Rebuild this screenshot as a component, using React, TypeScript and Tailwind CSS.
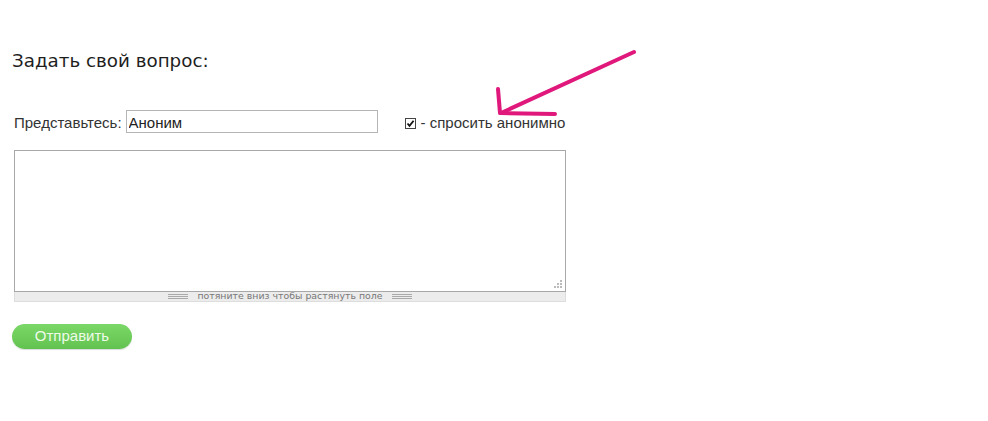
import { useState } from "react";

export default function App() {
  const [name, setName] = useState("Аноним");
  const [anon, setAnon] = useState(true);

  return (
    <div className="relative h-[421px] w-[988px] bg-white font-['Liberation_Sans',Arial,sans-serif] text-[#222]">
      <div className="flex flex-col pl-3 pt-[49px]">
        <h2 className="font-['DejaVu_Sans',sans-serif] text-[18.3px] leading-6 text-[#1e1e1e]">Задать свой вопрос:</h2>

        {/* name + anonymous */}
        <div className="mt-[36px] flex items-center pl-[2px]">
          <label className="pt-[3px] text-[15px] text-[#333]">Представьтесь:</label>
          <input
            value={name}
            onChange={(e) => setName(e.target.value)}
            className="ml-[4px] h-[23px] w-[252px] border border-[#b5b5b5] px-[2px] pt-[2px] text-[15px] text-[#222] outline-none"
          />
          <label
            className="ml-[27px] flex cursor-pointer items-center gap-[5px] pt-[3px] text-[15px] text-[#333]"
            onClick={() => setAnon(!anon)}
          >
            <span className="flex h-[11px] w-[11px] items-center justify-center border border-[#444] bg-white">
              {anon && (
                <svg width="9" height="9" viewBox="0 0 9 9">
                  <path d="M1.5 4.5 L3.5 6.8 L7.6 1.8" stroke="#111" strokeWidth="1.8" fill="none" />
                </svg>
              )}
            </span>
            - спросить анонимно
          </label>
        </div>

        {/* textarea with resize bar */}
        <div className="mt-[15px] ml-[2px] w-[552px]">
          <div className="relative h-[142px] border border-[#a8a8a8]">
            <textarea className="h-full w-full resize-none p-1 text-[13px] outline-none" />
            <div className="absolute bottom-[3px] right-[3px] grid grid-cols-3 gap-[1px]">
              {[0, 1, 2, 3, 4, 5, 6, 7, 8].map((i) => (
                <span
                  key={i}
                  className={`h-[2px] w-[2px] ${[2, 4, 5, 6, 7, 8].includes(i) ? "bg-[#bbb]" : "bg-transparent"}`}
                />
              ))}
            </div>
          </div>
          <div className="flex h-[10px] items-center justify-center gap-[9px] border-x border-b border-[#ddd] bg-[#ececec]">
            <div className="flex w-[20px] flex-col gap-[1px]">
              <span className="h-px bg-[#aaa]" />
              <span className="h-px bg-[#aaa]" />
              <span className="h-px bg-[#aaa]" />
            </div>
            <span className="font-['DejaVu_Sans',sans-serif] text-[9.4px] leading-[10px] text-[#777]">
              потяните вниз чтобы растянуть поле
            </span>
            <div className="flex w-[20px] flex-col gap-[1px]">
              <span className="h-px bg-[#aaa]" />
              <span className="h-px bg-[#aaa]" />
              <span className="h-px bg-[#aaa]" />
            </div>
          </div>
        </div>

        <button className="mt-[22px] h-[25px] w-[120px] rounded-full bg-gradient-to-b from-[#7bd868] to-[#62c24f] text-[15px] text-[#eefbe9] shadow-[0_1px_1px_rgba(0,0,0,0.15)]">
          Отправить
        </button>
      </div>

      {/* hand-drawn pink arrow */}
      <svg className="pointer-events-none absolute left-0 top-0" width="988" height="421">
        <g stroke="#e0187c" strokeWidth="4" strokeLinecap="round" fill="none">
          <path d="M634 52 L501 113" />
          <path d="M498 89 L500 113" />
          <path d="M501 113 L555 114" />
        </g>
      </svg>
    </div>
  );
}
